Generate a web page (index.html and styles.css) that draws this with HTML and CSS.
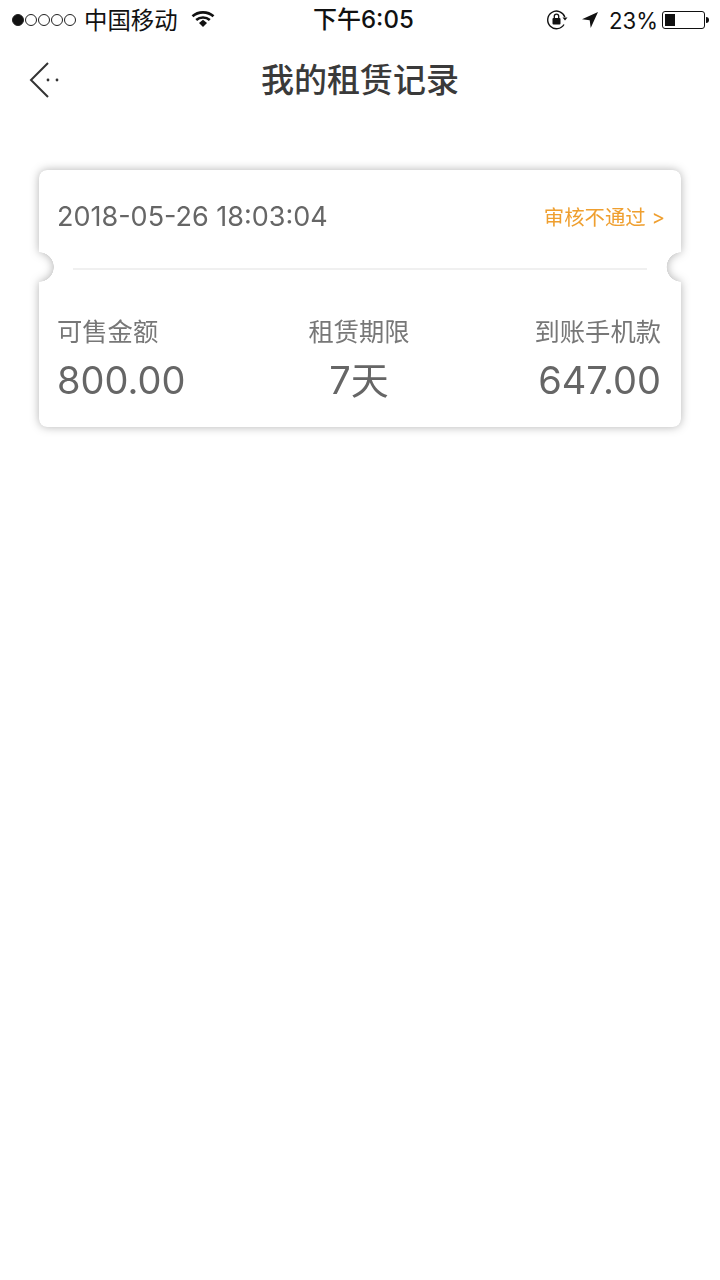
FILE: index.html
```html
<!DOCTYPE html>
<html lang="zh-CN">
<head>
<meta charset="utf-8">
<title>我的租赁记录</title>
<link rel="stylesheet" href="styles.css">
</head>
<body>
<div class="status">
  <div class="st-left">
    <span class="signal"><i class="on"></i><i></i><i></i><i></i><i></i></span>
    <span class="carrier">中国移动</span>
    <svg class="wifi" width="24" height="18" viewBox="0 0 24 18"><path d="M1.5 6.3C7.3 1 16.7 1 22.5 6.3" fill="none" stroke="#111" stroke-width="2.600"/><path d="M5.2 10C9 6.600 15 6.600 18.800 10" fill="none" stroke="#111" stroke-width="2.600"/><path d="M8 13l4-3.300 4 3.300-4 4z" fill="#111"/></svg>
  </div>
  <div class="st-time">下午6:05</div>
  <div class="st-right">
    <svg class="lock" width="22" height="22" viewBox="0 0 22 22"><path d="M18 15.500A8.800 8.800 0 1 1 18.800 8" fill="none" stroke="#111" stroke-width="1.400"/><path d="M16.500 8.500h5l-2.500 3z" fill="#111"/><rect x="6.500" y="9" width="8" height="6.500" rx="1" fill="#111"/><path d="M8.300 9V7.300a2.200 2.200 0 0 1 4.400 0V9" fill="none" stroke="#111" stroke-width="1.300"/></svg>
    <svg class="loc" width="18" height="18" viewBox="0 0 18 18"><path d="M17 1 1 8.300l7.700 1 1 7.700z" fill="#111"/></svg>
    <span class="pct">23%</span>
    <span class="batt"><span class="batt-fill"></span></span><span class="batt-cap"></span>
  </div>
</div>
<header class="nav">
  <svg class="back" width="32" height="38" viewBox="0 0 32 38"><path d="M19 2 2 19l17 17" fill="none" stroke="#333" stroke-width="2"/><circle cx="19" cy="19" r="1.400" fill="#333"/><circle cx="28" cy="19" r="1.400" fill="#333"/></svg>
  <h1 class="title">我的租赁记录</h1>
</header>
<main class="page">
  <section class="card">
    <div class="ticket">
      <div class="top">
        <span class="date">2018-05-26 18:03:04</span>
        <span class="state">审核不通过 &gt;</span>
      </div>
      <div class="rule"></div>
      <div class="stats">
        <div class="stat left"><span class="label">可售金额</span><span class="value">800.00</span></div>
        <div class="stat mid"><span class="label">租赁期限</span><span class="value">7天</span></div>
        <div class="stat right"><span class="label">到账手机款</span><span class="value">647.00</span></div>
      </div>
    </div>
  </section>
</main>
</body>
</html>
```
FILE: styles.css
```css
* { box-sizing: border-box; }
html, body { margin: 0; padding: 0; background: #fff; }
body {
  width: 720px;
  height: 1280px;
  overflow: hidden;
  font-family: Inter, "Noto Sans CJK SC", sans-serif;
  color: #666;
}
.status {
  height: 40px;
  display: flex;
  align-items: center;
  justify-content: space-between;
  padding: 0 11px 0 12px;
  color: #111;
  position: relative;
}
.st-left, .st-right { display: flex; align-items: center; }
.signal { display: flex; gap: 1px; margin-right: 8px; }
.signal i { width: 12px; height: 12px; border: 1px solid #222; border-radius: 50%; }
.signal i.on { background: #111; }
.carrier { font-size: 23.4px; margin-top: -2px; }
.wifi { margin-left: 13px; margin-top: -2px; }
.st-time { position: absolute; left: 313px; top: 4px; font-size: 24px; line-height: 32px; font-weight: 500; }
.lock { margin-right: 13px; margin-top: -1px; }
.loc { margin-right: 10px; }
.pct { font-size: 22.2px; font-weight: 400; }
.batt { width: 43px; height: 18px; border: 1px solid #111; border-radius: 3px; padding: 2px; margin-left: 4px; display: flex; }
.batt-fill { width: 10px; background: #111; }
.batt-cap { width: 3px; height: 6px; background: #111; border-radius: 0 3px 3px 0; margin-left: 1px; }
.nav {
  height: 80px;
  position: relative;
  display: flex;
  align-items: center;
  justify-content: center;
}
.back { position: absolute; left: 29px; top: 21px; }
.title { margin: 0; font-size: 33px; font-weight: 500; color: #3a3a3a; line-height: 44px; }
.page { padding: 50px 39px 0; }
.card { filter: drop-shadow(0 0 5px rgba(0, 0, 0, .3)); }
.ticket {
  height: 257px;
  background: #fff;
  border-radius: 8px;
  padding: 0 19px 0 18px;
  display: flex;
  flex-direction: column;
  -webkit-mask:
    radial-gradient(circle 15px at 0 97px, transparent 14.5px, #000 15px) left / 51% 100% no-repeat,
    radial-gradient(circle 15px at 100% 97px, transparent 14.5px, #000 15px) right / 51% 100% no-repeat;
  mask:
    radial-gradient(circle 15px at 0 97px, transparent 14.5px, #000 15px) left / 51% 100% no-repeat,
    radial-gradient(circle 15px at 100% 97px, transparent 14.5px, #000 15px) right / 51% 100% no-repeat;
}
.top {
  height: 98px;
  display: flex;
  justify-content: space-between;
  align-items: center;
}
.date { font-size: 27px; font-weight: 400; color: #666; margin-top: -6px; }
.state { font-size: 20.4px; color: #ef9f2f; margin-top: -7px; margin-right: -3px; }
.rule { height: 2px; background: #f0f0f0; margin: 0 15px 0 16px; }
.stats { display: flex; justify-content: space-between; margin-top: 47px; padding-right: 1px; }
.stat { display: flex; flex-direction: column; width: 200px; }
.stat.mid { align-items: center; }
.stat.right { align-items: flex-end; }
.label { font-size: 25.300px; line-height: 30px; color: #777; }
.value { font-size: 38px; font-weight: 400; line-height: 48px; margin-top: 9px; color: #666; }
```
